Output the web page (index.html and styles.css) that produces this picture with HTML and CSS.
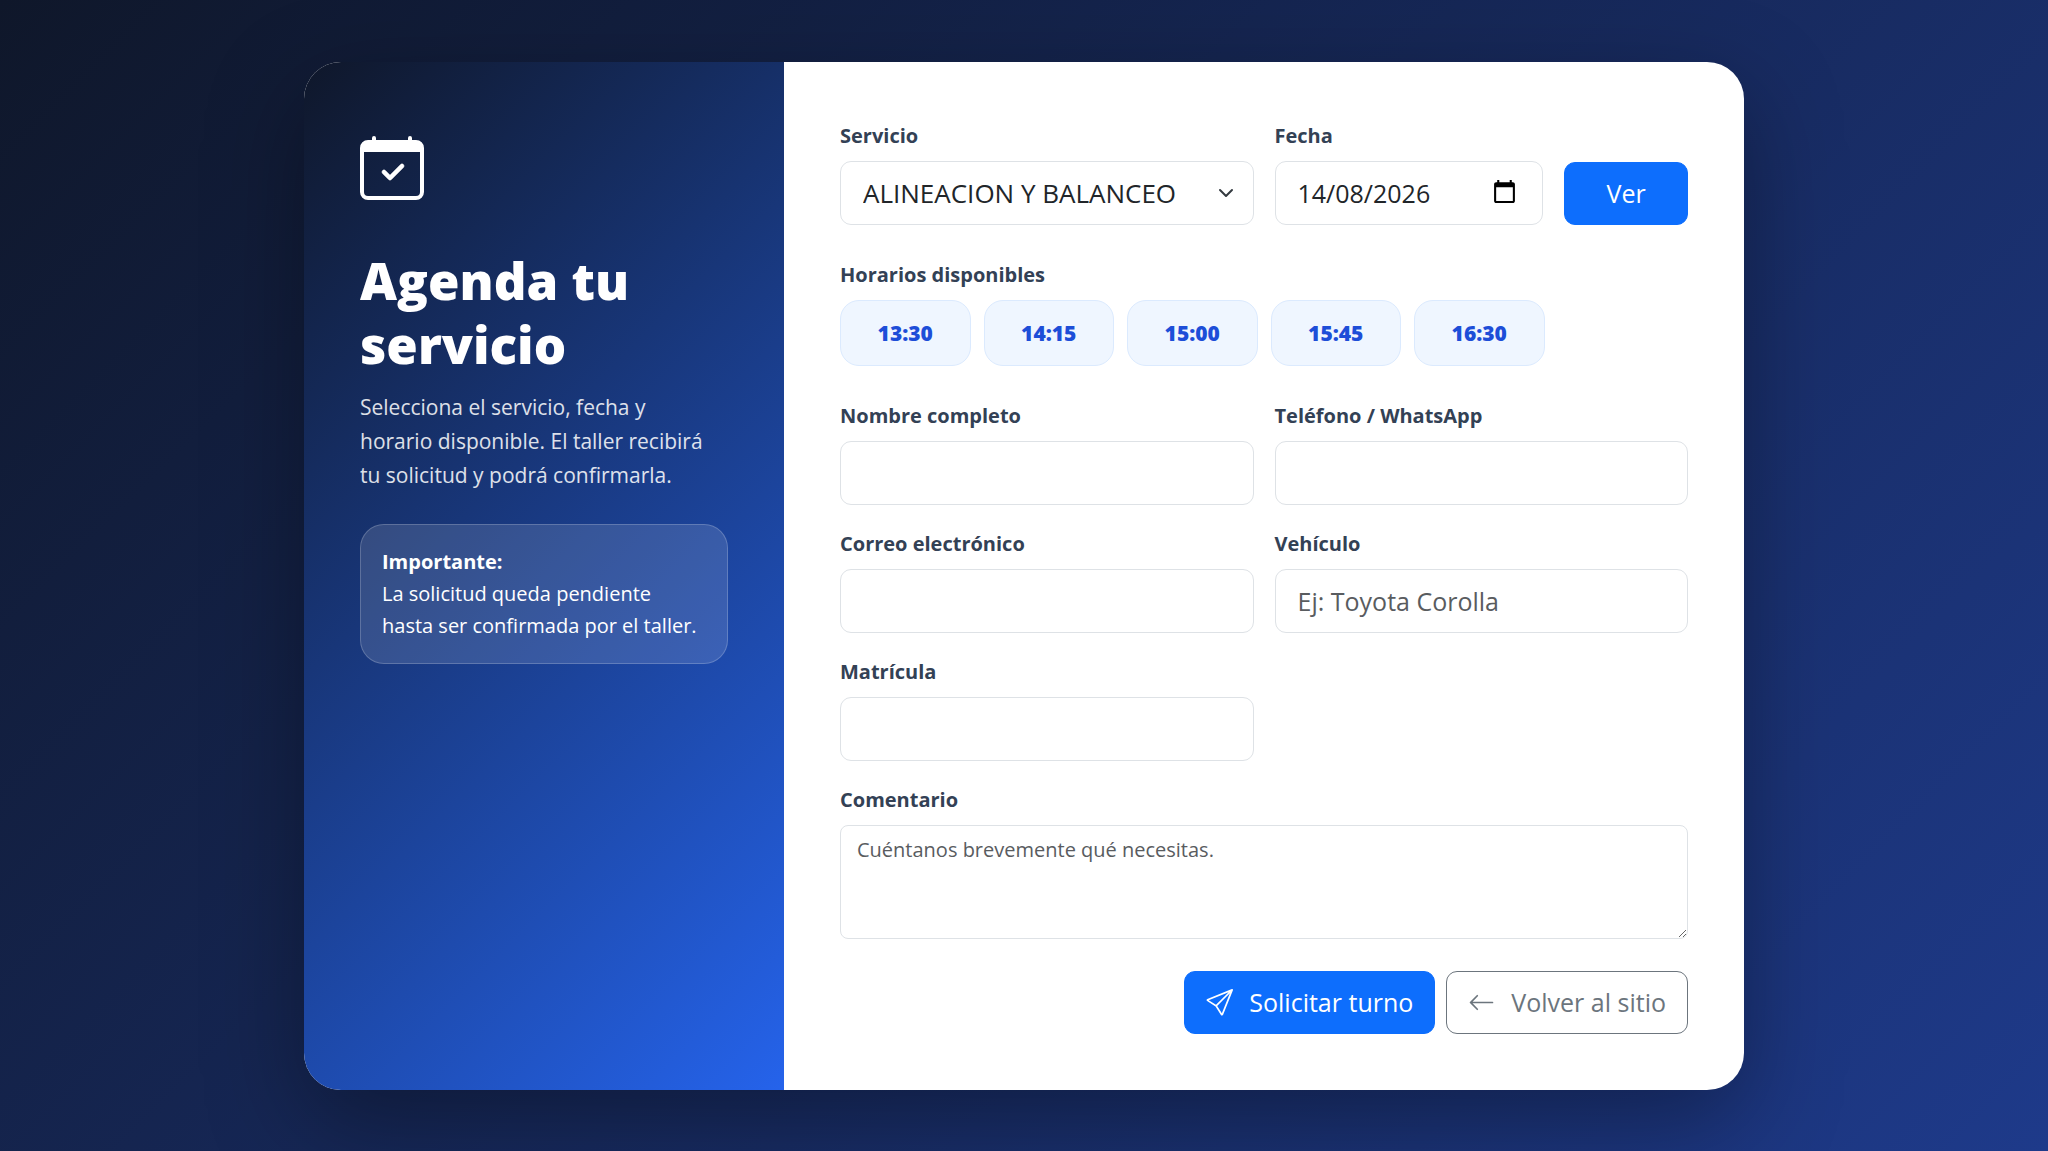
FILE: index.html
```html
<!DOCTYPE html>
<html lang="es">
<head>
  <meta charset="UTF-8">
  <meta name="viewport" content="width=device-width, initial-scale=1.0">
  <title>Agenda tu servicio</title>
  <link rel="stylesheet" href="styles.css">
</head>
<body>

  <main class="booking-card">
    <aside class="booking-side">
      <svg class="side-icon" viewBox="0 0 16 16" fill="currentColor" aria-hidden="true">
        <path d="M10.854 7.146a.5.5 0 0 1 0 .708l-3 3a.5.5 0 0 1-.708 0l-1.5-1.5a.5.5 0 1 1 .708-.708L7.5 9.793l2.646-2.647a.5.5 0 0 1 .708 0" stroke="currentColor" stroke-width=".15"/>
        <path d="M3.5 0a.5.5 0 0 1 .5.5V1h8V.5a.5.5 0 0 1 1 0V1h1a2 2 0 0 1 2 2v11a2 2 0 0 1-2 2H2a2 2 0 0 1-2-2V3a2 2 0 0 1 2-2h1V.5a.5.5 0 0 1 .5-.5M1 4v10a1 1 0 0 0 1 1h12a1 1 0 0 0 1-1V4z"/>
      </svg>
      <h1>Agenda tu servicio</h1>
      <p class="intro">Selecciona el servicio, fecha y horario disponible. El taller recibirá tu solicitud y podrá confirmarla.</p>
      <div class="notice">
        <strong>Importante:</strong><br>
        La solicitud queda pendiente hasta ser confirmada por el taller.
      </div>
    </aside>

    <div class="booking-form">
      <form class="row">
        <div class="field col-6">
          <label for="servicio">Servicio</label>
          <select id="servicio" class="control">
            <option>ALINEACION Y BALANCEO</option>
          </select>
        </div>
        <div class="field col-4">
          <label for="fecha">Fecha</label>
          <input type="text" id="fecha" class="control date" value="14/08/2026">
        </div>
        <div class="field col-2">
          <button type="submit" class="btn btn-primary">Ver</button>
        </div>
      </form>

      <form class="request">
        <div class="field">
          <span class="label" id="horarios">Horarios disponibles</span>
          <div class="slots" role="group" aria-labelledby="horarios">
            <button type="button" class="slot">13:30</button>
            <button type="button" class="slot">14:15</button>
            <button type="button" class="slot">15:00</button>
            <button type="button" class="slot">15:45</button>
            <button type="button" class="slot">16:30</button>
          </div>
        </div>

        <div class="row">
          <div class="field col-6">
            <label for="nombre">Nombre completo</label>
            <input type="text" id="nombre" class="control">
          </div>
          <div class="field col-6">
            <label for="telefono">Teléfono / WhatsApp</label>
            <input type="tel" id="telefono" class="control">
          </div>
          <div class="field col-6">
            <label for="correo">Correo electrónico</label>
            <input type="email" id="correo" class="control">
          </div>
          <div class="field col-6">
            <label for="vehiculo">Vehículo</label>
            <input type="text" id="vehiculo" class="control" placeholder="Ej: Toyota Corolla">
          </div>
          <div class="field col-6">
            <label for="matricula">Matrícula</label>
            <input type="text" id="matricula" class="control">
          </div>
          <div class="field col-12">
            <label for="comentario">Comentario</label>
            <textarea id="comentario" class="comment" rows="3" placeholder="Cuéntanos brevemente qué necesitas."></textarea>
          </div>
        </div>

        <div class="actions">
          <button type="submit" class="btn btn-primary">
            <svg viewBox="0 0 16 16" fill="currentColor" aria-hidden="true">
              <path d="M15.854.146a.5.5 0 0 1 .11.54l-5.819 14.547a.75.75 0 0 1-1.329.124l-3.178-4.995L.643 7.184a.75.75 0 0 1 .124-1.33L15.314.037a.5.5 0 0 1 .54.11ZM6.636 10.07l2.761 4.338L14.13 2.576zm6.787-8.201L1.591 6.602l4.339 2.76z"/>
            </svg>
            Solicitar turno
          </button>
          <a href="#" class="btn btn-outline">
            <svg viewBox="0 0 16 16" fill="currentColor" aria-hidden="true">
              <path fill-rule="evenodd" d="M15 8a.5.5 0 0 0-.5-.5H2.707l3.147-3.146a.5.5 0 1 0-.708-.708l-4 4a.5.5 0 0 0 0 .708l4 4a.5.5 0 0 0 .708-.708L2.707 8.5H14.5A.5.5 0 0 0 15 8"/>
            </svg>
            Volver al sitio
          </a>
        </div>
      </form>
    </div>
  </main>

</body>
</html>
```
FILE: styles.css
```css
* {
  box-sizing: border-box;
}

body {
  margin: 0;
  min-height: 100vh;
  padding: 32px;
  display: flex;
  align-items: center;
  justify-content: center;
  background: linear-gradient(135deg, #0f172a, #1e3a8a);
  font-family: "Segoe UI", "Open Sans", "Noto Sans", sans-serif;
  font-size: 20px;
  line-height: 32px;
  color: #212529;
}

.booking-card {
  display: grid;
  grid-template-columns: 1fr 2fr;
  width: 100%;
  max-width: 1440px;
  background: #fff;
  border-radius: 37px;
  overflow: hidden;
  box-shadow: 0 32px 96px rgba(0, 0, 0, 0.35);
}

/* left panel */
.booking-side {
  padding: 56px;
  background: linear-gradient(135deg, #0f172a, #2563eb);
  color: #fff;
}

.side-icon {
  display: block;
  width: 64px;
  height: 64px;
  margin: 18px 0 48px;
}

h1 {
  margin: 0 0 14px;
  font-size: 51px;
  line-height: 64px;
  font-weight: 800;
}

.intro {
  margin: 0 0 32px;
  padding-right: 8px;
  font-size: 21px;
  line-height: 34px;
  opacity: 0.85;
}

.notice {
  padding: 21px;
  border: 1px solid rgba(255, 255, 255, 0.2);
  border-radius: 24px;
  background: rgba(255, 255, 255, 0.13);
}

/* form */
.booking-form {
  padding: 56px;
}

.row {
  display: grid;
  grid-template-columns: repeat(12, 1fr);
  gap: 21px;
}

.col-2 { grid-column: span 2; }
.col-4 { grid-column: span 4; }
.col-6 { grid-column: span 6; }
.col-12 { grid-column: span 12; }

.field {
  display: flex;
  flex-direction: column;
  justify-content: flex-end;
}

label,
.label {
  margin-bottom: 7px;
  line-height: 36px;
  font-weight: 700;
  color: #334155;
}

.control,
.comment {
  width: 100%;
  border: 1px solid #dee2e6;
  background-color: #fff;
  font-family: inherit;
  color: #212529;
}

.control {
  height: 64px;
  padding: 0 22px;
  border-radius: 11px;
  font-size: 25px;
}

.comment {
  display: block;
  padding: 8px 16px;
  border-radius: 8px;
  font-size: 20px;
  line-height: 32px;
  resize: vertical;
}

.control::placeholder,
.comment::placeholder {
  color: #595c5f;
  opacity: 1;
}

select.control {
  appearance: none;
  font-size: 26px;
  background-image: url("data:image/svg+xml,%3csvg xmlns='http://www.w3.org/2000/svg' viewBox='0 0 16 16'%3e%3cpath fill='none' stroke='%23343a40' stroke-linecap='round' stroke-linejoin='round' stroke-width='2' d='m2 5 6 6 6-6'/%3e%3c/svg%3e");
  background-repeat: no-repeat;
  background-position: right 19px center;
  background-size: 16px;
}

.date {
  background-image: url("data:image/svg+xml,%3csvg xmlns='http://www.w3.org/2000/svg' viewBox='0 0 24 24'%3e%3cpath d='M20 3h-1V1h-2v2H7V1H5v2H4c-1.100 0-2 .9-2 2v16c0 1.100.9 2 2 2h16c1.100 0 2-.9 2-2V5c0-1.100-.9-2-2-2zm0 18H4V8h16v13z'/%3e%3c/svg%3e");
  background-repeat: no-repeat;
  background-position: right 25px top 17px;
  background-size: 25px;
}

.request {
  display: grid;
  gap: 32px;
  margin-top: 32px;
}

.slots {
  display: grid;
  grid-template-columns: repeat(auto-fill, minmax(120px, 1fr));
  gap: 13px;
}

.slot {
  height: 66px;
  border: 1px solid #dbeafe;
  border-radius: 19px;
  background: #eff6ff;
  font-family: inherit;
  font-size: 21px;
  font-weight: 800;
  color: #1d4ed8;
  cursor: pointer;
}

.actions {
  display: flex;
  justify-content: flex-end;
  gap: 11px;
}

.btn {
  display: flex;
  align-items: center;
  justify-content: center;
  gap: 16px;
  height: 63px;
  padding: 0 21px;
  border: 1px solid transparent;
  border-radius: 11px;
  font-family: inherit;
  font-size: 25px;
  text-decoration: none;
  cursor: pointer;
}

.btn svg {
  width: 27px;
  height: 27px;
}

.btn-primary {
  background: #0d6efd;
  border-color: #0d6efd;
  color: #fff;
}

.btn-outline {
  border-color: #6c757d;
  color: #6c757d;
}
```
